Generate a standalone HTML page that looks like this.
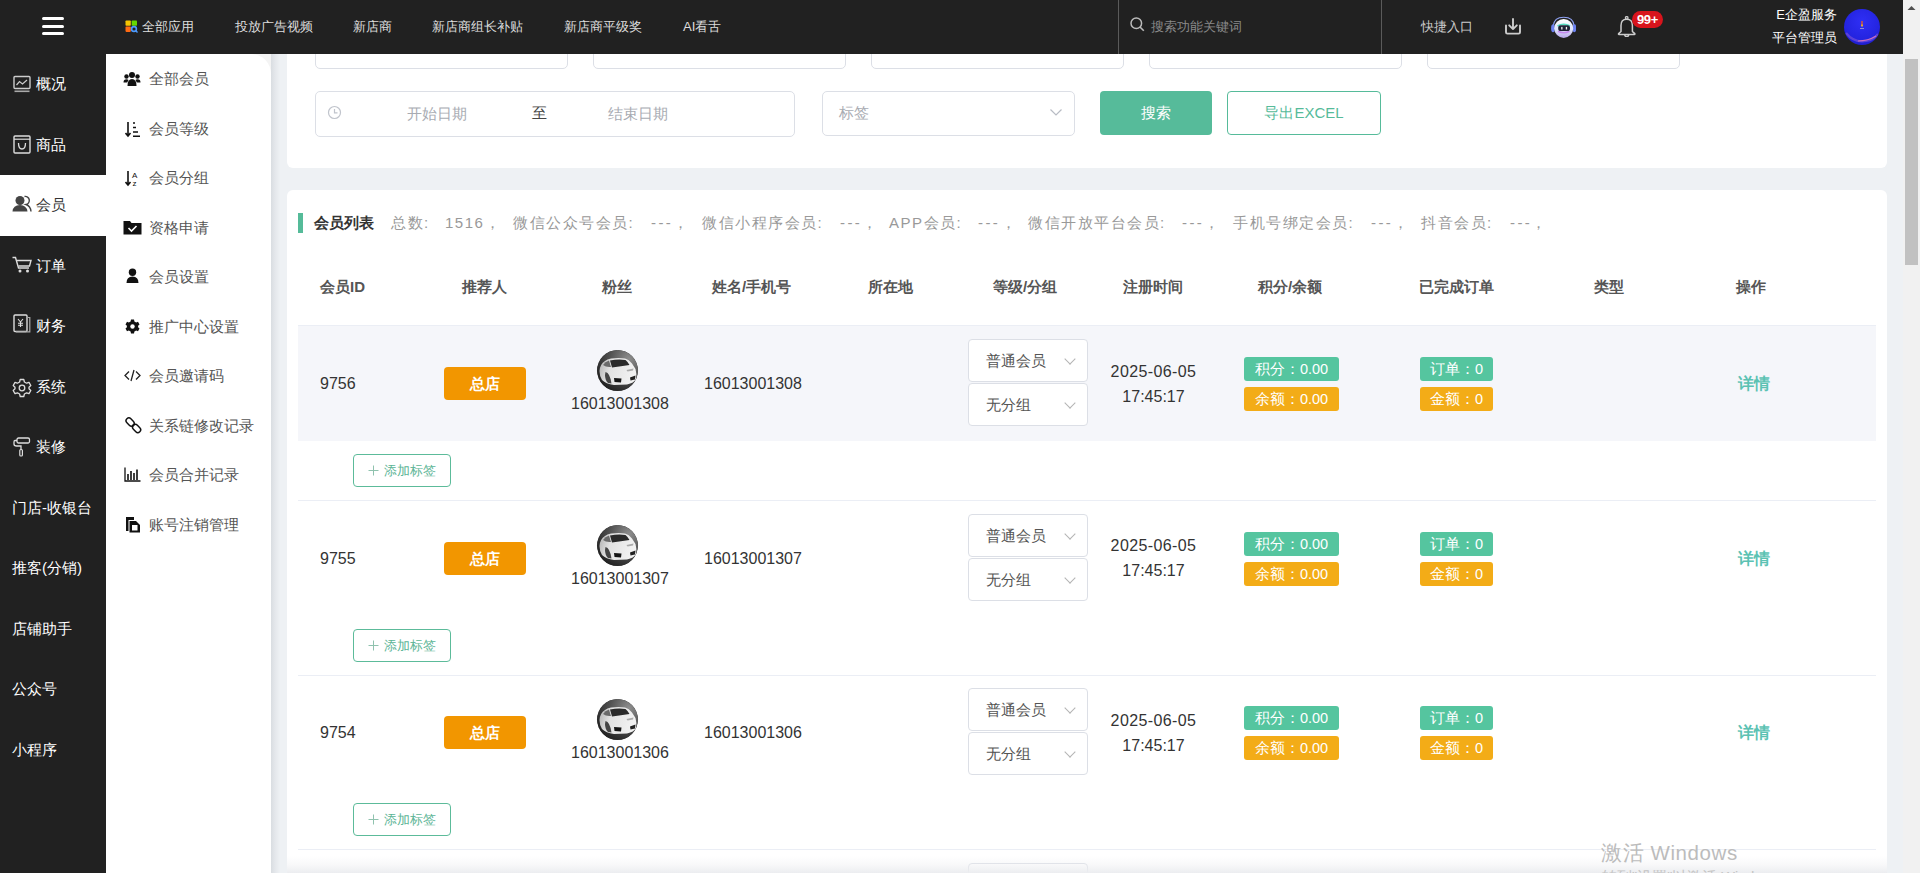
<!DOCTYPE html>
<html><head><meta charset="utf-8">
<style>
*{box-sizing:border-box;margin:0;padding:0}
html,body{width:1920px;height:873px;overflow:hidden;background:#eef1f4;font-family:"Liberation Sans",sans-serif;color:#333}
.abs{position:absolute}
#hdr{position:absolute;left:0;top:0;width:1903px;height:54px;background:#212121}
#side{position:absolute;left:0;top:54px;width:106px;height:819px;background:#212121}
#sub{position:absolute;left:106px;top:54px;width:165px;height:819px;background:#fff;border-top-right-radius:20px}
#subbg{position:absolute;left:106px;top:54px;width:181px;height:819px;background:linear-gradient(90deg,#f4f4f4 0,#f4f4f4 165px,#d9dde1 165px,#e4e7eb 169px,#eef1f4 174px)}
#scroll{position:absolute;left:1903px;top:0;width:17px;height:873px;background:#f1f1f1}
#thumb{position:absolute;left:1905px;top:59px;width:13px;height:206px;background:#c1c1c1}
.card{position:absolute;left:287px;width:1600px;background:#fff;border-radius:6px}
.nav{position:absolute;top:18px;font-size:13.2px;color:#ddd;line-height:18px;white-space:nowrap}
.mi{position:absolute;left:0;width:106px;height:60.5px;color:#fff;font-size:15px;font-weight:500;line-height:60px;padding-left:36px;white-space:nowrap}
.si{position:absolute;left:106px;width:165px;height:49.5px;color:#555;font-size:15px;line-height:49px;padding-left:43px;white-space:nowrap}
.inp{position:absolute;border:1px solid #dcdfe6;border-radius:5px;background:#fff}
.st{position:absolute;top:213px;font-size:15px;color:#999;line-height:20px;letter-spacing:1.5px;white-space:nowrap}
.th{position:absolute;top:278px;font-size:15px;font-weight:bold;color:#555;line-height:18px;white-space:nowrap}
.row{position:absolute;left:298px;width:1578px;height:174.5px}
.cell{position:absolute;font-size:16px;color:#333;line-height:20px;white-space:nowrap}
.btnz{position:absolute;width:82px;height:33px;background:#f29600;border-radius:4px;color:#fff;font-size:15px;font-weight:bold;text-align:center;line-height:33px}
.av{position:absolute;width:41px;height:41px;border-radius:50%;background:radial-gradient(circle at 50% 55%,#f2f2f2 0,#cfcfcf 35%,#444 60%,#2a2a2a 100%)}
.sel{position:absolute;left:670px;width:120px;height:43px;background:#fff;border:1px solid #dcdfe6;border-radius:4px;font-size:15px;color:#555;line-height:41px;padding-left:17px}
.chev{position:absolute;right:13px;top:15px;width:8px;height:8px;border-right:1px solid #b4b4b4;border-bottom:1px solid #b4b4b4;transform:rotate(45deg)}
.bdg{position:absolute;height:24px;border-radius:3px;color:#fff;font-size:14.5px;font-weight:500;line-height:24px;text-align:center;white-space:nowrap}
.g{background:#55c59f}.o{background:#f3ac17}
.tagb{position:absolute;left:55px;width:98px;height:33px;border:1px solid #5cbb9a;border-radius:4px;color:#5cb596;font-size:13px;line-height:31px;text-align:left;background:#fff}
.det{position:absolute;left:1440px;font-size:16px;color:#5bc2b3;line-height:20px;font-weight:600}
</style></head><body>
<div id="subbg"></div>
<div id="sub"></div>
<div id="scroll"></div><div id="thumb"></div>
<svg class="abs" style="left:1906px;top:4px" width="11" height="8" viewBox="0 0 11 8"><path d="M1.5 6 L5.5 2 L9.5 6 Z" fill="#505050"/></svg>

<!-- cards -->
<div class="card" style="top:-20px;height:188px"></div>
<div class="card" style="top:190px;height:700px"></div>

<!-- filter row 1 (cut off) -->
<div class="inp" style="left:315px;top:20px;width:253px;height:49px"></div>
<div class="inp" style="left:593px;top:20px;width:253px;height:49px"></div>
<div class="inp" style="left:871px;top:20px;width:253px;height:49px"></div>
<div class="inp" style="left:1149px;top:20px;width:253px;height:49px"></div>
<div class="inp" style="left:1427px;top:20px;width:253px;height:49px"></div>

<!-- filter row 2 -->
<div class="inp" style="left:315px;top:91px;width:480px;height:46px"></div>
<svg class="abs" style="left:327px;top:105px" width="16" height="16" viewBox="0 0 16 16"><circle cx="7.5" cy="7.5" r="6" fill="none" stroke="#c0c4cc" stroke-width="1.2"/><path d="M7.5 4 V7.8 H10.5" fill="none" stroke="#c0c4cc" stroke-width="1.2"/></svg>
<div class="abs" style="left:407px;top:104px;font-size:15px;color:#a8abb2;line-height:20px">开始日期</div>
<div class="abs" style="left:532px;top:103px;font-size:15px;color:#444;line-height:20px">至</div>
<div class="abs" style="left:608px;top:104px;font-size:15px;color:#a8abb2;line-height:20px">结束日期</div>
<div class="inp" style="left:822px;top:91px;width:253px;height:45px"></div>
<div class="abs" style="left:839px;top:103px;font-size:15px;color:#a8abb2;line-height:20px">标签</div>
<svg class="abs" style="left:1049px;top:107px" width="14" height="10" viewBox="0 0 14 10"><path d="M1.5 2.5 L7 8 L12.5 2.5" fill="none" stroke="#b8bcc4" stroke-width="1.2"/></svg>
<div class="abs" style="left:1100px;top:91px;width:112px;height:44px;background:#56bb9a;border-radius:4px;color:#fff;font-size:15px;text-align:center;line-height:44px">搜索</div>
<div class="abs" style="left:1227px;top:91px;width:154px;height:44px;border:1px solid #56bb9a;border-radius:4px;color:#56bb9a;font-size:15px;text-align:center;line-height:42px">导出EXCEL</div>

<!-- list title -->
<div class="abs" style="left:298px;top:213px;width:5px;height:20px;background:#55bb99"></div>
<div class="abs" style="left:314px;top:213px;font-size:15px;font-weight:bold;color:#333;line-height:20px">会员列表</div>
<div class="st" style="left:391px">总数:</div>
<div class="st" style="left:445px">1516</div>
<div class="st" style="left:485px">，</div>
<div class="st" style="left:513px">微信公众号会员:</div>
<div class="st" style="left:651px;letter-spacing:2.4px">---</div>
<div class="st" style="left:673px">，</div>
<div class="st" style="left:702px">微信小程序会员:</div>
<div class="st" style="left:840px;letter-spacing:2.4px">---</div>
<div class="st" style="left:862px">，</div>
<div class="st" style="left:889px">APP会员:</div>
<div class="st" style="left:978px;letter-spacing:2.4px">---</div>
<div class="st" style="left:1001px">，</div>
<div class="st" style="left:1028px">微信开放平台会员:</div>
<div class="st" style="left:1182px;letter-spacing:2.4px">---</div>
<div class="st" style="left:1204px">，</div>
<div class="st" style="left:1233px">手机号绑定会员:</div>
<div class="st" style="left:1371px;letter-spacing:2.4px">---</div>
<div class="st" style="left:1393px">，</div>
<div class="st" style="left:1421px">抖音会员:</div>
<div class="st" style="left:1510px;letter-spacing:2.4px">---</div>
<div class="st" style="left:1531px">，</div>

<!-- table header -->
<div class="th" style="left:320px">会员ID</div>
<div class="th" style="left:462px">推荐人</div>
<div class="th" style="left:602px">粉丝</div>
<div class="th" style="left:712px">姓名/手机号</div>
<div class="th" style="left:868px">所在地</div>
<div class="th" style="left:993px">等级/分组</div>
<div class="th" style="left:1123px">注册时间</div>
<div class="th" style="left:1258px">积分/余额</div>
<div class="th" style="left:1419px">已完成订单</div>
<div class="th" style="left:1594px">类型</div>
<div class="th" style="left:1736px">操作</div>
<div class="abs" style="left:298px;top:325px;width:1578px;height:1px;background:#ebeef5"></div>

<div class="row" style="top:325.0px">
<div class="abs" style="left:0;top:1px;width:1578px;height:114.5px;background:#f5f6fa"></div><div class="abs" style="left:0;top:175px;width:1578px;height:1px;background:#ebeef5"></div>
<div class="cell" style="left:22px;top:49px">9756</div>
<div class="btnz" style="left:146px;top:42px">总店</div>
<svg class="av" style="left:299px;top:25px" width="41" height="41" viewBox="0 0 41 41"><defs><radialGradient id="cg0" cx="0.78" cy="0.22" r="0.95"><stop offset="0" stop-color="#8e8e8e"/><stop offset="0.5" stop-color="#505050"/><stop offset="1" stop-color="#1a1a1a"/></radialGradient><linearGradient id="cb0" x1="0" y1="0" x2="1" y2="0.2"><stop offset="0" stop-color="#b0b0b0"/><stop offset="0.35" stop-color="#e2e2e2"/><stop offset="1" stop-color="#f2f2f2"/></linearGradient></defs><circle cx="20.5" cy="20.5" r="20.5" fill="url(#cg0)"/><path d="M2.5 21 Q3 14 8 11 Q10 9 14 8.5 Q22 7.5 28 8.5 Q32 9.5 35 13.5 L38.5 19 Q40 24 39 29 Q37 33 30 34.5 L17 35 Q9 34 5 30 Q2.5 26 2.5 21Z" fill="url(#cb0)"/><path d="M13 10.5 Q21 9 28.5 10 Q31 12 32.5 15 Q24 16 15 17.5 Z" fill="#2a2a2a"/><path d="M6 15 Q8 11.5 12 10.5 L14 17 Q9 17.5 6 15Z" fill="#6a6a6a"/><path d="M8.5 22 Q13 23 14.5 33.5 L11 33 Q8 30 8 25Z" fill="#454545"/><path d="M17 28 L24.5 28.5 L24 32.5 L17.5 32 Z" fill="#151515"/><path d="M33 27.5 L38.5 25.5 L38 29.5 L33.5 30.5Z" fill="#222"/><path d="M29.5 20 L36.5 18.5 L36 20.5 L30.5 21.5Z" fill="#aaa"/></svg>
<div class="cell" style="left:273px;top:69px">16013001308</div>
<div class="cell" style="left:406px;top:49px">16013001308</div>
<div class="sel" style="top:14px">普通会员<i class="chev"></i></div>
<div class="sel" style="top:58px">无分组<i class="chev"></i></div>
<div class="cell" style="left:795px;top:36.5px;width:121px;text-align:center;letter-spacing:0.4px">2025-06-05</div>
<div class="cell" style="left:795px;top:61.5px;width:121px;text-align:center">17:45:17</div>
<div class="bdg g" style="left:946px;top:32px;width:95px">积分：0.00</div>
<div class="bdg o" style="left:946px;top:62px;width:95px">余额：0.00</div>
<div class="bdg g" style="left:1122px;top:32px;width:73px">订单：0</div>
<div class="bdg o" style="left:1122px;top:62px;width:73px">金额：0</div>
<div class="det" style="top:49px">详情</div>
<div class="tagb" style="top:129px"><svg class="abs" style="left:14px;top:10px" width="11" height="11" viewBox="0 0 11 11"><path d="M5.5 0.5 V10.5 M0.5 5.5 H10.5" stroke="#8fc2ae" stroke-width="1"/></svg><span class="abs" style="left:30px;top:0">添加标签</span></div>
</div>
<div class="row" style="top:499.5px">
<div class="abs" style="left:0;top:1px;width:1578px;height:114.5px;background:transparent"></div><div class="abs" style="left:0;top:175px;width:1578px;height:1px;background:#ebeef5"></div>
<div class="cell" style="left:22px;top:49px">9755</div>
<div class="btnz" style="left:146px;top:42px">总店</div>
<svg class="av" style="left:299px;top:25px" width="41" height="41" viewBox="0 0 41 41"><defs><radialGradient id="cg1" cx="0.78" cy="0.22" r="0.95"><stop offset="0" stop-color="#8e8e8e"/><stop offset="0.5" stop-color="#505050"/><stop offset="1" stop-color="#1a1a1a"/></radialGradient><linearGradient id="cb1" x1="0" y1="0" x2="1" y2="0.2"><stop offset="0" stop-color="#b0b0b0"/><stop offset="0.35" stop-color="#e2e2e2"/><stop offset="1" stop-color="#f2f2f2"/></linearGradient></defs><circle cx="20.5" cy="20.5" r="20.5" fill="url(#cg1)"/><path d="M2.5 21 Q3 14 8 11 Q10 9 14 8.5 Q22 7.5 28 8.5 Q32 9.5 35 13.5 L38.5 19 Q40 24 39 29 Q37 33 30 34.5 L17 35 Q9 34 5 30 Q2.5 26 2.5 21Z" fill="url(#cb1)"/><path d="M13 10.5 Q21 9 28.5 10 Q31 12 32.5 15 Q24 16 15 17.5 Z" fill="#2a2a2a"/><path d="M6 15 Q8 11.5 12 10.5 L14 17 Q9 17.5 6 15Z" fill="#6a6a6a"/><path d="M8.5 22 Q13 23 14.5 33.5 L11 33 Q8 30 8 25Z" fill="#454545"/><path d="M17 28 L24.5 28.5 L24 32.5 L17.5 32 Z" fill="#151515"/><path d="M33 27.5 L38.5 25.5 L38 29.5 L33.5 30.5Z" fill="#222"/><path d="M29.5 20 L36.5 18.5 L36 20.5 L30.5 21.5Z" fill="#aaa"/></svg>
<div class="cell" style="left:273px;top:69px">16013001307</div>
<div class="cell" style="left:406px;top:49px">16013001307</div>
<div class="sel" style="top:14px">普通会员<i class="chev"></i></div>
<div class="sel" style="top:58px">无分组<i class="chev"></i></div>
<div class="cell" style="left:795px;top:36.5px;width:121px;text-align:center;letter-spacing:0.4px">2025-06-05</div>
<div class="cell" style="left:795px;top:61.5px;width:121px;text-align:center">17:45:17</div>
<div class="bdg g" style="left:946px;top:32px;width:95px">积分：0.00</div>
<div class="bdg o" style="left:946px;top:62px;width:95px">余额：0.00</div>
<div class="bdg g" style="left:1122px;top:32px;width:73px">订单：0</div>
<div class="bdg o" style="left:1122px;top:62px;width:73px">金额：0</div>
<div class="det" style="top:49px">详情</div>
<div class="tagb" style="top:129px"><svg class="abs" style="left:14px;top:10px" width="11" height="11" viewBox="0 0 11 11"><path d="M5.5 0.5 V10.5 M0.5 5.5 H10.5" stroke="#8fc2ae" stroke-width="1"/></svg><span class="abs" style="left:30px;top:0">添加标签</span></div>
</div>
<div class="row" style="top:674.0px">
<div class="abs" style="left:0;top:1px;width:1578px;height:114.5px;background:transparent"></div><div class="abs" style="left:0;top:175px;width:1578px;height:1px;background:#ebeef5"></div>
<div class="cell" style="left:22px;top:49px">9754</div>
<div class="btnz" style="left:146px;top:42px">总店</div>
<svg class="av" style="left:299px;top:25px" width="41" height="41" viewBox="0 0 41 41"><defs><radialGradient id="cg2" cx="0.78" cy="0.22" r="0.95"><stop offset="0" stop-color="#8e8e8e"/><stop offset="0.5" stop-color="#505050"/><stop offset="1" stop-color="#1a1a1a"/></radialGradient><linearGradient id="cb2" x1="0" y1="0" x2="1" y2="0.2"><stop offset="0" stop-color="#b0b0b0"/><stop offset="0.35" stop-color="#e2e2e2"/><stop offset="1" stop-color="#f2f2f2"/></linearGradient></defs><circle cx="20.5" cy="20.5" r="20.5" fill="url(#cg2)"/><path d="M2.5 21 Q3 14 8 11 Q10 9 14 8.5 Q22 7.5 28 8.5 Q32 9.5 35 13.5 L38.5 19 Q40 24 39 29 Q37 33 30 34.5 L17 35 Q9 34 5 30 Q2.5 26 2.5 21Z" fill="url(#cb2)"/><path d="M13 10.5 Q21 9 28.5 10 Q31 12 32.5 15 Q24 16 15 17.5 Z" fill="#2a2a2a"/><path d="M6 15 Q8 11.5 12 10.5 L14 17 Q9 17.5 6 15Z" fill="#6a6a6a"/><path d="M8.5 22 Q13 23 14.5 33.5 L11 33 Q8 30 8 25Z" fill="#454545"/><path d="M17 28 L24.5 28.5 L24 32.5 L17.5 32 Z" fill="#151515"/><path d="M33 27.5 L38.5 25.5 L38 29.5 L33.5 30.5Z" fill="#222"/><path d="M29.5 20 L36.5 18.5 L36 20.5 L30.5 21.5Z" fill="#aaa"/></svg>
<div class="cell" style="left:273px;top:69px">16013001306</div>
<div class="cell" style="left:406px;top:49px">16013001306</div>
<div class="sel" style="top:14px">普通会员<i class="chev"></i></div>
<div class="sel" style="top:58px">无分组<i class="chev"></i></div>
<div class="cell" style="left:795px;top:36.5px;width:121px;text-align:center;letter-spacing:0.4px">2025-06-05</div>
<div class="cell" style="left:795px;top:61.5px;width:121px;text-align:center">17:45:17</div>
<div class="bdg g" style="left:946px;top:32px;width:95px">积分：0.00</div>
<div class="bdg o" style="left:946px;top:62px;width:95px">余额：0.00</div>
<div class="bdg g" style="left:1122px;top:32px;width:73px">订单：0</div>
<div class="bdg o" style="left:1122px;top:62px;width:73px">金额：0</div>
<div class="det" style="top:49px">详情</div>
<div class="tagb" style="top:129px"><svg class="abs" style="left:14px;top:10px" width="11" height="11" viewBox="0 0 11 11"><path d="M5.5 0.5 V10.5 M0.5 5.5 H10.5" stroke="#8fc2ae" stroke-width="1"/></svg><span class="abs" style="left:30px;top:0">添加标签</span></div>
</div>
<div class="row" style="top:848.5px">
<div class="abs" style="left:0;top:1px;width:1578px;height:114.5px;background:transparent"></div><div class="abs" style="left:0;top:175px;width:1578px;height:1px;background:#ebeef5"></div>
<div class="cell" style="left:22px;top:49px">9753</div>
<div class="btnz" style="left:146px;top:42px">总店</div>
<svg class="av" style="left:299px;top:25px" width="41" height="41" viewBox="0 0 41 41"><defs><radialGradient id="cg3" cx="0.78" cy="0.22" r="0.95"><stop offset="0" stop-color="#8e8e8e"/><stop offset="0.5" stop-color="#505050"/><stop offset="1" stop-color="#1a1a1a"/></radialGradient><linearGradient id="cb3" x1="0" y1="0" x2="1" y2="0.2"><stop offset="0" stop-color="#b0b0b0"/><stop offset="0.35" stop-color="#e2e2e2"/><stop offset="1" stop-color="#f2f2f2"/></linearGradient></defs><circle cx="20.5" cy="20.5" r="20.5" fill="url(#cg3)"/><path d="M2.5 21 Q3 14 8 11 Q10 9 14 8.5 Q22 7.5 28 8.5 Q32 9.5 35 13.5 L38.5 19 Q40 24 39 29 Q37 33 30 34.5 L17 35 Q9 34 5 30 Q2.5 26 2.5 21Z" fill="url(#cb3)"/><path d="M13 10.5 Q21 9 28.5 10 Q31 12 32.5 15 Q24 16 15 17.5 Z" fill="#2a2a2a"/><path d="M6 15 Q8 11.5 12 10.5 L14 17 Q9 17.5 6 15Z" fill="#6a6a6a"/><path d="M8.5 22 Q13 23 14.5 33.5 L11 33 Q8 30 8 25Z" fill="#454545"/><path d="M17 28 L24.5 28.5 L24 32.5 L17.5 32 Z" fill="#151515"/><path d="M33 27.5 L38.5 25.5 L38 29.5 L33.5 30.5Z" fill="#222"/><path d="M29.5 20 L36.5 18.5 L36 20.5 L30.5 21.5Z" fill="#aaa"/></svg>
<div class="cell" style="left:273px;top:69px">16013001305</div>
<div class="cell" style="left:406px;top:49px">16013001305</div>
<div class="sel" style="top:14px">普通会员<i class="chev"></i></div>
<div class="sel" style="top:58px">无分组<i class="chev"></i></div>
<div class="cell" style="left:795px;top:36.5px;width:121px;text-align:center;letter-spacing:0.4px">2025-06-05</div>
<div class="cell" style="left:795px;top:61.5px;width:121px;text-align:center">17:45:17</div>
<div class="bdg g" style="left:946px;top:32px;width:95px">积分：0.00</div>
<div class="bdg o" style="left:946px;top:62px;width:95px">余额：0.00</div>
<div class="bdg g" style="left:1122px;top:32px;width:73px">订单：0</div>
<div class="bdg o" style="left:1122px;top:62px;width:73px">金额：0</div>
<div class="det" style="top:49px">详情</div>
<div class="tagb" style="top:129px"><svg class="abs" style="left:14px;top:10px" width="11" height="11" viewBox="0 0 11 11"><path d="M5.5 0.5 V10.5 M0.5 5.5 H10.5" stroke="#8fc2ae" stroke-width="1"/></svg><span class="abs" style="left:30px;top:0">添加标签</span></div>
</div>
<div class="abs" style="left:287px;top:856px;width:1600px;height:17px;background:linear-gradient(180deg,rgba(236,237,240,0) 0,rgba(236,237,240,.35) 50%,rgba(236,237,240,1) 100%)"></div>
<div class="abs" style="left:1601px;top:841px;font-size:20.5px;color:#bcbcbc;line-height:24px;letter-spacing:0.6px;white-space:nowrap">激活 Windows</div>
<div class="abs" style="left:1602px;top:868px;font-size:14.5px;color:#c4c4c4;line-height:18px;white-space:nowrap">转到"设置"以激活 Windows。</div>
<div id="side"></div>
<div class="mi" style="top:54.0px;padding-left:36px;color:#fff"><svg class="abs" style="left:13px;top:21px" width="18" height="18" viewBox="0 0 18 18"><rect x="1" y="1.5" width="16" height="12" rx="1" fill="none" stroke="#ccc" stroke-width="1.4"/><path d="M3.5 10 L6.5 6.5 L9.5 9 L14 5" fill="none" stroke="#ccc" stroke-width="1.2"/><rect x="1.5" y="15.5" width="15" height="1.6" fill="#aaa"/></svg>概况</div>
<div class="mi" style="top:114.5px;padding-left:36px;color:#fff"><svg class="abs" style="left:13px;top:20px" width="18" height="19" viewBox="0 0 18 19"><rect x="1" y="1" width="16" height="17" rx="1" fill="none" stroke="#ddd" stroke-width="1.4"/><path d="M1 4.2 H17" stroke="#ddd" stroke-width="1.2"/><path d="M5.5 8 Q5.5 14 9 14 Q12.5 14 12.5 8" fill="none" stroke="#ddd" stroke-width="1.3"/></svg>商品</div>
<div class="mi" style="top:175.0px;background:#fff;padding-left:36px;color:#333;font-weight:normal"><svg class="abs" style="left:12px;top:20px" width="21" height="18" viewBox="0 0 21 18"><circle cx="8" cy="5.5" r="4.5" fill="#444"/><path d="M0.5 16.5 Q1 10 8 10 Q14.5 10 15.5 16.5 Z" fill="#444"/><path d="M12.5 1.5 A4 4 0 0 1 14 9.5 Q18.5 11 19 16.5" fill="none" stroke="#444" stroke-width="1.4"/></svg>会员</div>
<div class="mi" style="top:235.5px;padding-left:36px;color:#fff"><svg class="abs" style="left:12px;top:20px" width="20" height="17" viewBox="0 0 20 17"><path d="M0.5 1.5 H3.5 L6.5 12 H17" fill="none" stroke="#ddd" stroke-width="1.4"/><path d="M5 4.5 H19 L17.5 10 H6.5" fill="none" stroke="#ddd" stroke-width="1.4"/><circle cx="8" cy="15" r="1.5" fill="#ddd"/><circle cx="15.5" cy="15" r="1.5" fill="#ddd"/></svg>订单</div>
<div class="mi" style="top:296.0px;padding-left:36px;color:#fff"><svg class="abs" style="left:13px;top:18px" width="18" height="19" viewBox="0 0 18 19"><rect x="1" y="1" width="13" height="16.5" rx="1" fill="none" stroke="#ddd" stroke-width="1.4"/><path d="M15 3.5 H16.8 V17.8 H3" fill="none" stroke="#aaa" stroke-width="1.2"/><path d="M5 5 L7.5 8 L10 5 M7.5 8 V13 M5 9.3 H10 M5 11.3 H10" fill="none" stroke="#ddd" stroke-width="1.1"/></svg>财务</div>
<div class="mi" style="top:356.5px;padding-left:36px;color:#fff"><svg class="abs" style="left:12px;top:21px" width="20" height="20" viewBox="0 0 20 20"><path d="M8.2 1.5 H11.8 L12.4 4 L14.6 5.2 L17 4.4 L18.8 7.5 L17 9.3 V10.7 L18.8 12.5 L17 15.6 L14.6 14.8 L12.4 16 L11.8 18.5 H8.2 L7.6 16 L5.4 14.8 L3 15.6 L1.2 12.5 L3 10.7 V9.3 L1.2 7.5 L3 4.4 L5.4 5.2 L7.6 4 Z" fill="none" stroke="#ddd" stroke-width="1.3" stroke-linejoin="round"/><circle cx="10" cy="10" r="2.8" fill="none" stroke="#ddd" stroke-width="1.3"/></svg>系统</div>
<div class="mi" style="top:417.0px;padding-left:36px;color:#fff"><svg class="abs" style="left:13px;top:20px" width="18" height="20" viewBox="0 0 18 20"><rect x="4" y="1" width="12.5" height="5" rx="1.5" fill="none" stroke="#ddd" stroke-width="1.3"/><path d="M4 3.5 H2 Q1 3.5 1 5 V7 Q1 9 3.5 9 H8 V12.5" fill="none" stroke="#ddd" stroke-width="1.3"/><rect x="6.8" y="12.5" width="2.6" height="6.5" rx="1" fill="none" stroke="#ddd" stroke-width="1.2"/></svg>装修</div>
<div class="mi" style="top:477.5px;padding-left:12px;color:#fff">门店-收银台</div>
<div class="mi" style="top:538.0px;padding-left:12px;color:#fff">推客(分销)</div>
<div class="mi" style="top:598.5px;padding-left:12px;color:#fff">店铺助手</div>
<div class="mi" style="top:659.0px;padding-left:12px;color:#fff">公众号</div>
<div class="mi" style="top:719.5px;padding-left:12px;color:#fff">小程序</div>
<div class="si" style="top:54.0px"><svg class="abs" style="left:17px;top:17px" width="18" height="16" viewBox="0 0 18 16"><circle cx="9" cy="4" r="3" fill="#111"/><circle cx="3.5" cy="5.5" r="2.2" fill="#111"/><circle cx="14.5" cy="5.5" r="2.2" fill="#111"/><path d="M4.5 15 Q4.5 8 9 8 Q13.5 8 13.5 15Z" fill="#111"/><path d="M0.5 11.5 Q0.5 8.2 3.5 8.2 Q5 8.2 5.5 9 L4.2 11.5Z" fill="#111"/><path d="M17.5 11.5 Q17.5 8.2 14.5 8.2 Q13 8.2 12.5 9 L13.8 11.5Z" fill="#111"/></svg>全部会员</div>
<div class="si" style="top:103.5px"><svg class="abs" style="left:19px;top:17px" width="16" height="17" viewBox="0 0 16 17"><path d="M3 1 V14.5 M0.5 12 L3 15 L5.5 12" fill="none" stroke="#111" stroke-width="1.6"/><path d="M8 2 H10 M8 6.5 H11 M8 11 H13 M8 15.2 H15" stroke="#111" stroke-width="1.6"/></svg>会员等级</div>
<div class="si" style="top:153.0px"><svg class="abs" style="left:19px;top:17px" width="16" height="17" viewBox="0 0 16 17"><path d="M3 1 V14.5 M0.5 12 L3 15 L5.5 12" fill="none" stroke="#111" stroke-width="1.6"/><text x="7" y="7.5" font-size="8" font-family="Liberation Sans" fill="#111">A</text><text x="7.5" y="16" font-size="8" font-family="Liberation Sans" fill="#111">z</text></svg>会员分组</div>
<div class="si" style="top:202.5px"><svg class="abs" style="left:17px;top:17px" width="19" height="15" viewBox="0 0 19 15"><path d="M0.5 1 H7 L8.5 3 H18.5 V14.5 H0.5Z" fill="#111"/><path d="M5.5 8 L8.5 11 L13.5 6" fill="none" stroke="#fff" stroke-width="1.6"/></svg>资格申请</div>
<div class="si" style="top:252.0px"><svg class="abs" style="left:20px;top:16px" width="13" height="16" viewBox="0 0 13 16"><circle cx="6.5" cy="4.2" r="3.7" fill="#111"/><path d="M0.5 15 Q0.5 8.5 6.5 8.5 Q12.5 8.5 12.5 15Z" fill="#111"/></svg>会员设置</div>
<div class="si" style="top:301.5px"><svg class="abs" style="left:19px;top:17px" width="15" height="15" viewBox="0 0 15 15"><path d="M6 0.5 H9 L9.4 2.4 L11.2 3.4 L13 2.8 L14.5 5.4 L13.1 6.7 V8.3 L14.5 9.6 L13 12.2 L11.2 11.6 L9.4 12.6 L9 14.5 H6 L5.6 12.6 L3.8 11.6 L2 12.2 L0.5 9.6 L1.9 8.3 V6.7 L0.5 5.4 L2 2.8 L3.8 3.4 L5.6 2.4Z" fill="#111"/><circle cx="7.5" cy="7.5" r="2.2" fill="#fff"/></svg>推广中心设置</div>
<div class="si" style="top:351.0px"><svg class="abs" style="left:18px;top:18px" width="17" height="13" viewBox="0 0 17 13"><path d="M5 2.5 L1 6.5 L5 10.5 M12 2.5 L16 6.5 L12 10.5 M10 1 L7 12" fill="none" stroke="#222" stroke-width="1.3"/></svg>会员邀请码</div>
<div class="si" style="top:400.5px"><svg class="abs" style="left:18px;top:15px" width="18" height="18" viewBox="0 0 18 18"><rect x="1.6" y="3.2" width="9" height="5.6" rx="2.8" transform="rotate(45 6.1 6)" fill="none" stroke="#111" stroke-width="1.5"/><rect x="8.1" y="9.7" width="9" height="5.6" rx="2.8" transform="rotate(45 12.6 12.5)" fill="none" stroke="#111" stroke-width="1.5"/><circle cx="9.3" cy="9.3" r="1.1" fill="#111"/></svg>关系链修改记录</div>
<div class="si" style="top:450.0px"><svg class="abs" style="left:18px;top:17px" width="17" height="15" viewBox="0 0 17 15"><path d="M1 0.5 V14 H16.5" fill="none" stroke="#111" stroke-width="1.3"/><path d="M4 13 V7 M7 13 V4 M10 13 V6 M13 13 V2.5" stroke="#111" stroke-width="1.6"/></svg>会员合并记录</div>
<div class="si" style="top:499.5px"><svg class="abs" style="left:19px;top:16px" width="16" height="17" viewBox="0 0 16 17"><path d="M1 1 H9 V4 H3.5 V15 H1Z" fill="#111"/><path d="M4.5 5 H11 L15 9 V16.5 H4.5Z" fill="#111"/><path d="M7 9 H12.5 V14.5 H7Z" fill="#fff"/></svg>账号注销管理</div>

<div id="hdr">
<div class="abs" style="left:42px;top:17px;width:22px;height:3px;border-radius:2px;background:#fff"></div>
<div class="abs" style="left:42px;top:24.5px;width:22px;height:3px;border-radius:2px;background:#fff"></div>
<div class="abs" style="left:42px;top:32px;width:22px;height:3px;border-radius:2px;background:#fff"></div>
<svg class="abs" style="left:125px;top:20px" width="13" height="13" viewBox="0 0 13 13"><rect x="0.5" y="0.5" width="5.3" height="5.3" rx="0.8" fill="#f5c400"/><rect x="6.7" y="0.5" width="5.3" height="5.3" rx="0.8" fill="#66d800"/><rect x="0.5" y="6.6" width="5.3" height="5.3" rx="0.8" fill="#ff6a13"/><circle cx="9" cy="9" r="2.4" fill="none" stroke="#4d9bff" stroke-width="1.6"/><path d="M10.6 10.6 L12.5 12.5" stroke="#4d9bff" stroke-width="1.4"/></svg>
<div class="nav" style="left:142px">全部应用</div>
<div class="nav" style="left:235px">投放广告视频</div>
<div class="nav" style="left:353px">新店商</div>
<div class="nav" style="left:432px">新店商组长补贴</div>
<div class="nav" style="left:564px">新店商平级奖</div>
<div class="nav" style="left:683px">AI看舌</div>
<div class="abs" style="left:1118px;top:0;width:1px;height:54px;background:#5a5a5a"></div>
<div class="abs" style="left:1381px;top:0;width:1px;height:54px;background:#5a5a5a"></div>
<svg class="abs" style="left:1130px;top:17px" width="15" height="15" viewBox="0 0 15 15"><circle cx="6.3" cy="6.3" r="5.3" fill="none" stroke="#bbb" stroke-width="1.5"/><path d="M10 10 L13.8 13.8" stroke="#bbb" stroke-width="1.6"/></svg>
<div class="abs" style="left:1151px;top:18px;font-size:13px;color:#8a8a8a;line-height:18px;white-space:nowrap">搜索功能关键词</div>
<div class="nav" style="left:1421px;top:18px;color:#ccc">快捷入口</div>
<svg class="abs" style="left:1504px;top:18px" width="18" height="17" viewBox="0 0 18 17"><path d="M9 1 V11 M5.2 7.3 L9 11.1 L12.8 7.3" fill="none" stroke="#ccc" stroke-width="1.9" stroke-linecap="round" stroke-linejoin="round"/><path d="M2 7.5 V14.2 Q2 15.6 3.4 15.6 H14.6 Q16 15.6 16 14.2 V7.5" fill="none" stroke="#ccc" stroke-width="1.9" stroke-linecap="round"/></svg>
<svg class="abs" style="left:1551px;top:16px" width="25" height="23" viewBox="0 0 25 23"><defs><linearGradient id="rb" x1="0" y1="0" x2="0" y2="1"><stop offset="0" stop-color="#ffffff"/><stop offset="0.55" stop-color="#dfe6fb"/><stop offset="1" stop-color="#b9a6ec"/></linearGradient></defs><path d="M2.2 10 Q3 1.2 12.7 1.2 Q22.4 1.2 23.2 10" fill="none" stroke="#8fa2f2" stroke-width="1.1"/><ellipse cx="2" cy="12.3" rx="1.9" ry="4" fill="#6b80ee"/><ellipse cx="23.4" cy="12.3" rx="1.9" ry="4" fill="#6b80ee"/><circle cx="12.7" cy="12.4" r="9.5" fill="url(#rb)"/><path d="M6.5 10 Q12.7 6.5 19 10" fill="none" stroke="#55dcc0" stroke-width="1.6"/><path d="M7 15.3 Q12.7 18.2 18.5 15.3" fill="none" stroke="#c58af0" stroke-width="1.6"/><rect x="7.2" y="9.2" width="11.8" height="5.9" rx="2.6" fill="#1f2236"/><rect x="10.2" y="10.9" width="1.3" height="2.6" fill="#eee"/><rect x="14.8" y="10.9" width="1.3" height="2.6" fill="#eee"/></svg>
<svg class="abs" style="left:1617px;top:16px" width="20" height="21" viewBox="0 0 20 21"><circle cx="9.7" cy="1.9" r="1.3" fill="none" stroke="#ccc" stroke-width="1.3"/><path d="M4 15.5 V9.5 Q4 3.3 9.7 3.3 Q15.4 3.3 15.4 9.5 V15.5 L17.8 17.6 Q18.2 18.4 17.4 18.4 H2 Q1.2 18.4 1.6 17.6 Z" fill="none" stroke="#ccc" stroke-width="1.5" stroke-linejoin="round"/><path d="M7.7 18.6 A2 2 0 0 0 11.7 18.6" fill="none" stroke="#ccc" stroke-width="1.5"/></svg>
<div class="abs" style="left:1632px;top:11px;width:31px;height:17px;border-radius:9px;background:#d8141c;color:#fff;font-size:13px;font-weight:bold;line-height:17px;text-align:center;letter-spacing:-0.3px">99+</div>
<div class="abs" style="left:1737px;top:7px;width:100px;font-size:13px;color:#fff;font-weight:500;line-height:16px;text-align:right">E企盈服务</div>
<div class="abs" style="left:1737px;top:30px;width:100px;font-size:13px;color:#fff;font-weight:500;line-height:16px;text-align:right">平台管理员</div>
<svg class="abs" style="left:1844px;top:9px" width="36" height="36" viewBox="0 0 36 36"><defs><radialGradient id="avg" cx="0.5" cy="0.35" r="0.7"><stop offset="0" stop-color="#2f2ff5"/><stop offset="0.7" stop-color="#2424e0"/><stop offset="1" stop-color="#1c1cc8"/></radialGradient><clipPath id="avc"><circle cx="18" cy="18" r="18"/></clipPath></defs><circle cx="18" cy="18" r="18" fill="url(#avg)"/><g clip-path="url(#avc)"><path d="M2 24 Q10 34 22 32 Q30 30.5 34 25" fill="none" stroke="#6a4ad8" stroke-width="2.2" opacity="0.8"/><path d="M14 32 Q24 32 32 27" fill="none" stroke="#e87ab8" stroke-width="1.2" opacity="0.8"/></g><rect x="17.3" y="12" width="1.4" height="5" fill="#e05a30"/><rect x="17.2" y="15.5" width="1.6" height="2" fill="#f0c020"/><rect x="16" y="19" width="4" height="1" fill="#ccc" opacity="0.6"/></svg></div>
</div>
<script>
(function(){
  try{
  var t=document.createElement('span');
  t.style.cssText='position:absolute;left:-9999px;top:0;font-size:100px;white-space:nowrap;font-family:"Liberation Sans",sans-serif';
  t.textContent='\u4f1a\u5458\u4f1a\u5458';
  document.body.appendChild(t);
  var w=t.getBoundingClientRect().width;
  document.body.removeChild(t);
  if(!(w>0) || w>=360) return;
  var re=/[\u2E80-\u9FFF\uFF00-\uFFEF\u3000-\u303F]+/g;
  var walker=document.createTreeWalker(document.body,NodeFilter.SHOW_TEXT,null);
  var nodes=[];
  while(walker.nextNode()) nodes.push(walker.currentNode);
  nodes.forEach(function(n){
    var s=n.nodeValue; re.lastIndex=0;
    if(!re.test(s)) return; re.lastIndex=0;
    var p=n.parentNode; if(!p || !(p instanceof HTMLElement) || p.nodeName==='SCRIPT' || p.nodeName==='STYLE') return;
    var cs=getComputedStyle(p); var fs=parseFloat(cs.fontSize); var ls=parseFloat(cs.letterSpacing)||0;
    var frag=document.createDocumentFragment(); var last=0; var m;
    while((m=re.exec(s))){
      if(m.index>last) frag.appendChild(document.createTextNode(s.slice(last,m.index)));
      var sp=document.createElement('span'); sp.style.fontSize=(fs*1.2)+'px'; sp.style.letterSpacing=(ls+fs*0.1)+'px'; sp.textContent=m[0]; frag.appendChild(sp);
      last=m.index+m[0].length;
    }
    if(last<s.length) frag.appendChild(document.createTextNode(s.slice(last)));
    p.replaceChild(frag,n);
  });
  }catch(e){}
})();
</script>
</body></html>
